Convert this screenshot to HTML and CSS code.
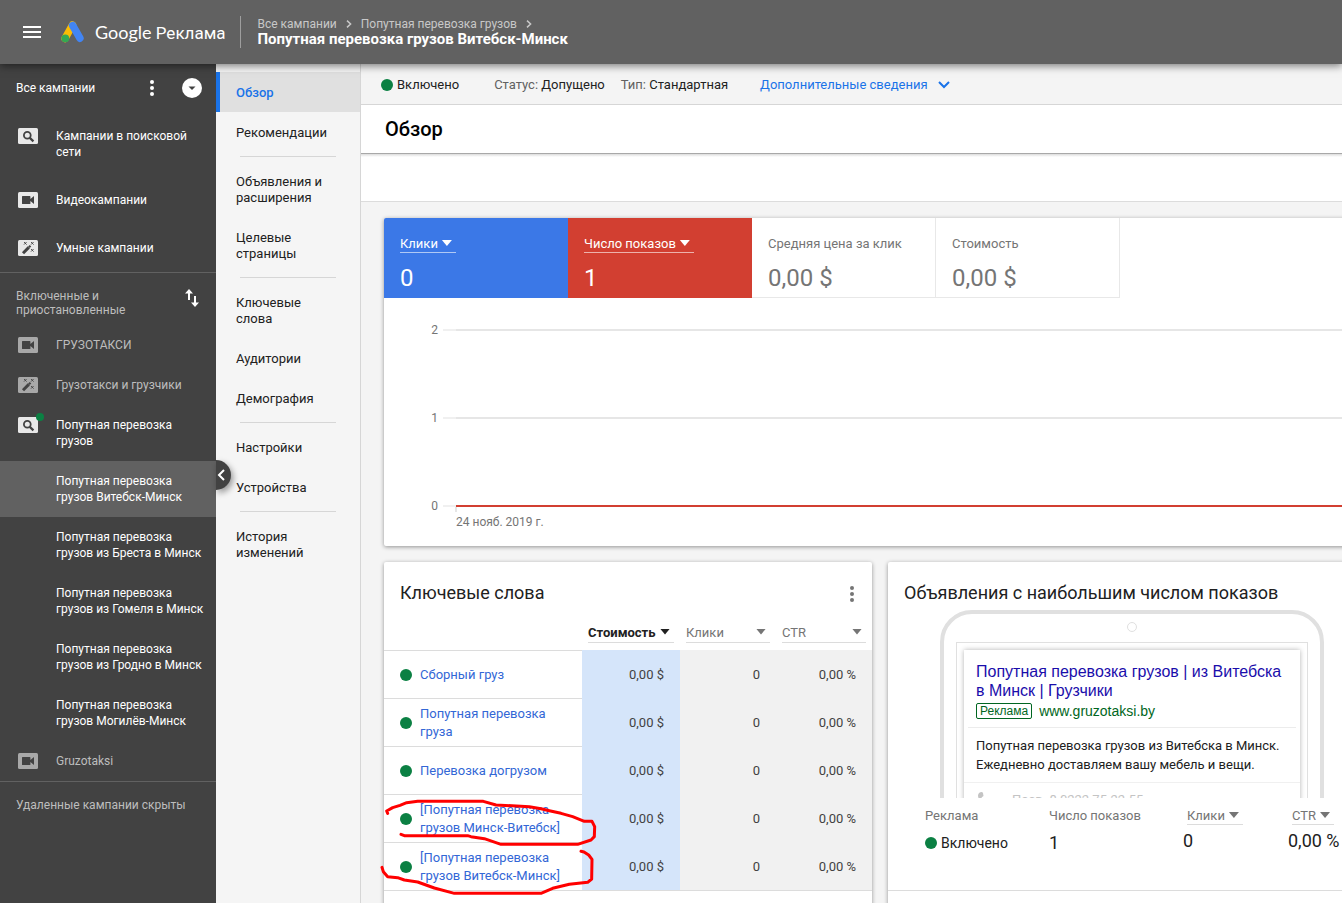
FILE: index.html
```html
<!DOCTYPE html>
<html lang="ru">
<head>
<meta charset="utf-8">
<title>Google Реклама</title>
<link rel="stylesheet" href="styles.css">
</head>
<body>
<svg class="defs" aria-hidden="true">
  <symbol id="i-search" viewBox="0 0 20 16"><rect width="20" height="16" rx="1.5" fill="currentColor"/><circle cx="9.3" cy="7.2" r="3.4" fill="none" stroke="#424242" stroke-width="1.800"/><path d="M11.600 9.600l3.800 3.800" stroke="#424242" stroke-width="2.200"/></symbol>
  <symbol id="i-video" viewBox="0 0 20 16"><rect width="20" height="16" rx="1.5" fill="currentColor"/><path d="M4 4.600q0-.6.6-.6h7.200q.6 0 .6.600v2.400L16 4v8l-3.600-3v2.400q0 .6-.6.6H4.600q-.6 0-.6-.6z" fill="#424242"/></symbol>
  <symbol id="i-wand" viewBox="0 0 20 16"><rect width="20" height="16" rx="1.5" fill="currentColor"/><path d="M5 13.200l5.800-5.800" stroke="#424242" stroke-width="3"/><path d="M10.900 7.300l1.600-1.600" stroke="#424242" stroke-width="2.200"/><path d="M6 2l2.600 2.600M8.600 2L6 4.600M13 2l2.600 2.600M15.600 2L13 4.600M13 9l2.600 2.600M15.600 9L13 11.600" stroke="#424242" stroke-width=".9"/></symbol>
  <symbol id="i-chevron" viewBox="0 0 6 8"><path d="M1 .6L4.600 4 1 7.400" fill="none" stroke="currentColor" stroke-width="1.500"/></symbol>
  <symbol id="i-more" viewBox="0 0 4 16"><circle cx="2" cy="2" r="2" fill="currentColor"/><circle cx="2" cy="8" r="2" fill="currentColor"/><circle cx="2" cy="14" r="2" fill="currentColor"/></symbol>
</svg>

<header class="topbar">
  <button class="plain" aria-label="Меню"><svg width="18" height="12" viewBox="0 0 18 12"><path d="M0 1h18M0 6h18M0 11h18" stroke="#fff" stroke-width="2"/></svg></button>
  <a class="brand" href="#">
    <svg width="24" height="22" viewBox="0 0 24 22"><path d="M11.500 4L4 17.500" stroke="#fbbc04" stroke-width="7.500" stroke-linecap="round"/><path d="M11.600 4.400L18.900 17.200" stroke="#4285f4" stroke-width="7.500" stroke-linecap="round"/><circle cx="4.300" cy="17.300" r="3.900" fill="#34a853"/></svg>
    <span class="brand-text"><span class="brand-name">Google</span> Реклама</span>
  </a>
  <div class="crumbs">
    <nav class="crumb-path"><a href="#">Все кампании</a><svg width="6" height="8"><use href="#i-chevron"/></svg><a href="#">Попутная перевозка грузов</a><svg width="6" height="8"><use href="#i-chevron"/></svg></nav>
    <div class="crumb-current">Попутная перевозка грузов Витебск-Минск</div>
  </div>
</header>

<div class="layout">
  <aside class="sidebar">
    <div class="side-head"><span>Все кампании</span>
      <button class="plain more" aria-label="Ещё"><svg width="4" height="16"><use href="#i-more"/></svg></button>
      <button class="plain" aria-label="Свернуть"><svg width="20" height="20" viewBox="0 0 20 20"><circle cx="10" cy="10" r="10" fill="#fff"/><path d="M6.500 8.500h7L10 12z" fill="#424242"/></svg></button>
    </div>
    <div class="group types">
      <a class="camp" href="#"><svg width="20" height="16"><use href="#i-search"/></svg><span>Кампании в поисковой сети</span></a>
      <a class="camp" href="#"><svg width="20" height="16"><use href="#i-video"/></svg><span>Видеокампании</span></a>
      <a class="camp" href="#"><svg width="20" height="16"><use href="#i-wand"/></svg><span>Умные кампании</span></a>
    </div>
    <div class="side-sort"><span>Включенные и приостановленные</span>
      <button class="plain" aria-label="Сортировка"><svg width="14" height="18" viewBox="0 0 14 18"><path d="M4 2v9M10 7v9" stroke="#fff" stroke-width="2"/><path d="M0 4.500L4 0l4 4.500zM6 13.500l4 4.500 4-4.500z" fill="#fff"/></svg></button>
    </div>
    <div class="group">
      <a class="camp paused" href="#"><svg width="20" height="16"><use href="#i-video"/></svg><span>ГРУЗОТАКСИ</span></a>
      <a class="camp paused" href="#"><svg width="20" height="16"><use href="#i-wand"/></svg><span>Грузотакси и грузчики</span></a>
      <a class="camp live" href="#"><svg width="20" height="16"><use href="#i-search"/></svg><span>Попутная перевозка грузов</span></a>
      <a class="camp child selected" href="#"><span>Попутная перевозка<br>грузов Витебск-Минск</span></a>
      <a class="camp child" href="#"><span>Попутная перевозка<br>грузов из Бреста в Минск</span></a>
      <a class="camp child" href="#"><span>Попутная перевозка<br>грузов из Гомеля в Минск</span></a>
      <a class="camp child" href="#"><span>Попутная перевозка<br>грузов из Гродно в Минск</span></a>
      <a class="camp child" href="#"><span>Попутная перевозка<br>грузов Могилёв-Минск</span></a>
      <a class="camp paused" href="#"><svg width="20" height="16"><use href="#i-video"/></svg><span>Gruzotaksi</span></a>
    </div>
    <div class="side-foot">Удаленные кампании скрыты</div>
  </aside>

  <nav class="pages">
    <a class="active" href="#">Обзор</a>
    <a href="#">Рекомендации</a>
    <hr>
    <a href="#">Объявления и расширения</a>
    <a href="#">Целевые<br>страницы</a>
    <hr>
    <a href="#">Ключевые<br>слова</a>
    <a href="#">Аудитории</a>
    <a href="#">Демография</a>
    <hr>
    <a href="#">Настройки</a>
    <a href="#">Устройства</a>
    <hr>
    <a href="#">История<br>изменений</a>
    <button class="collapse" aria-label="Свернуть панель"><svg width="9" height="12" viewBox="0 0 9 12"><path d="M8 1L3 6l5 5" fill="none" stroke="#fff" stroke-width="2"/></svg></button>
  </nav>

  <main class="main">
    <div class="status">
      <span class="state"><i class="dot"></i>Включено</span>
      <span class="pair"><span class="muted">Статус:</span> Допущено</span>
      <span class="pair"><span class="muted">Тип:</span> Стандартная</span>
      <button class="details">Дополнительные сведения<svg width="12" height="8" viewBox="0 0 12 8"><path d="M1 1l5 5 5-5" fill="none" stroke="#1a73e8" stroke-width="2"/></svg></button>
    </div>
    <div class="title-bar"><h1>Обзор</h1></div>
    <div class="filter-bar"></div>

    <div class="cards">
      <section class="card chart-card">
        <div class="metrics">
          <div class="metric blue"><button class="pick">Клики<i class="caret"></i></button><div class="big">0</div></div>
          <div class="metric red"><button class="pick">Число показов<i class="caret"></i></button><div class="big">1</div></div>
          <div class="metric"><div class="name">Средняя цена за клик</div><div class="big">0,00 $</div></div>
          <div class="metric"><div class="name">Стоимость</div><div class="big">0,00 $</div></div>
        </div>
        <div class="chart">
          <div class="tick"><span>2</span><i class="stub"></i><i class="rule"></i></div>
          <div class="tick"><span>1</span><i class="stub"></i><i class="rule"></i></div>
          <div class="tick"><span>0</span><i class="stub"></i><i class="rule series"></i></div>
        </div>
        <div class="date">24 нояб. 2019 г.</div>
      </section>

      <section class="card keywords">
        <div class="card-head"><h2>Ключевые слова</h2><button class="plain" aria-label="Ещё"><svg width="4" height="16"><use href="#i-more"/></svg></button></div>
        <table>
          <colgroup><col class="c-word"><col class="c-cost"><col class="c-num"><col class="c-num"></colgroup>
          <thead><tr><td></td><th><button class="sort on">Стоимость<i class="caret"></i></button></th><th><button class="sort">Клики<i class="caret"></i></button></th><th><button class="sort">CTR<i class="caret"></i></button></th></tr></thead>
          <tbody>
            <tr><td><div class="word"><i class="dot"></i><a href="#">Сборный груз</a></div></td><td>0,00 $</td><td>0</td><td>0,00 %</td></tr>
            <tr><td><div class="word"><i class="dot"></i><a href="#">Попутная перевозка<br>груза</a></div></td><td>0,00 $</td><td>0</td><td>0,00 %</td></tr>
            <tr><td><div class="word"><i class="dot"></i><a href="#">Перевозка догрузом</a></div></td><td>0,00 $</td><td>0</td><td>0,00 %</td></tr>
            <tr><td><div class="word"><i class="dot"></i><a href="#">[Попутная перевозка<br>грузов Минск-Витебск]</a></div></td><td>0,00 $</td><td>0</td><td>0,00 %</td></tr>
            <tr><td><div class="word"><i class="dot"></i><a href="#">[Попутная перевозка<br>грузов Витебск-Минск]</a></div></td><td>0,00 $</td><td>0</td><td>0,00 %</td></tr>
          </tbody>
        </table>
        <svg class="marker" viewBox="0 0 900 519" aria-hidden="true"><g fill="none" stroke="#f00" stroke-width="9" stroke-linecap="round" stroke-linejoin="round"><path d="M35 250L32 243 50 233 72 226 92 218 125 214H322L360 225 460 230 495 236 520 242 555 250 590 260 625 274H648L656 290 655 320 645 330 605 343H375L325 326 285 320 275 317H85L75 313"/><path d="M18 412L22 425 35 440 65 443 85 450 125 456 175 474 235 490H495L530 475 580 463 635 457 647 447 648 388 638 375 624 366 615 364"/></g></svg>
      </section>

      <section class="card ads">
        <div class="card-head"><h2>Объявления с наибольшим числом показов</h2></div>
        <div class="preview">
          <div class="phone">
            <i class="camera"></i>
            <div class="screen"><div class="ad">
              <div class="ad-top"><a class="ad-title" href="#">Попутная перевозка грузов | из Витебска<br>в Минск | Грузчики</a><div class="ad-url"><span class="tag">Реклама</span>www.gruzotaksi.by</div></div>
              <p class="ad-text">Попутная перевозка грузов из Витебска в Минск.<br>Ежедневно доставляем вашу мебель и вещи.</p>
              <div class="ad-call"><svg width="14" height="14" viewBox="0 0 14 14"><path d="M1 1q3-2 4 0l.500 3-2 1.500q1 2 3 3L8 6.500l3.500 1v4q-1 2.500-5 1Q0 9 0 3z" fill="#c4c4c4"/></svg><span>Позв. 8 0222 75-22-55</span></div>
            </div></div>
          </div>
        </div>
        <div class="ad-stats">
          <div><span class="label">Реклама</span><span class="state on"><i class="dot"></i>Включено</span></div>
          <div><span class="label">Число показов</span><span class="value">1</span></div>
          <div><button class="sort">Клики<i class="caret"></i></button><span class="value">0</span></div>
          <div><button class="sort">CTR<i class="caret"></i></button><span class="value">0,00 %</span></div>
        </div>
      </section>
    </div>
  </main>
</div>
</body>
</html>
```
FILE: styles.css
```css
* { box-sizing: border-box; }
body { margin: 0; height: 100vh; display: flex; flex-direction: column; overflow: hidden; font: 13px/16px Roboto, "Liberation Sans", sans-serif; color: #212121; background: #f4f4f4; }
a { color: inherit; text-decoration: none; }
svg { display: block; flex: none; }
h1, h2, p { margin: 0; font-weight: 400; }
i { display: block; flex: none; font-style: normal; }
button { padding: 0; border: 0; background: none; font: inherit; color: inherit; cursor: pointer; }
.defs { position: absolute; width: 0; height: 0; }
.plain { flex: none; }
.dot { width: 12px; height: 12px; border-radius: 50%; background: #0b8043; }
.caret { width: 10px; height: 6px; background: currentColor; clip-path: polygon(0 0, 100% 0, 50% 100%); }

.topbar { position: relative; z-index: 3; flex: none; height: 64px; display: flex; align-items: center; padding-left: 23px; background: #616161; color: #fff; box-shadow: 0 2px 8px rgba(0, 0, 0, .5); }
.brand { display: flex; align-items: center; gap: 10px; margin-left: 20px; }
.brand-text { font-size: 17px; line-height: 24px; }
.brand-name { font-family: Lato, Roboto, sans-serif; font-size: 18px; }
.crumbs { margin-left: 14px; padding-left: 17px; border-left: 1px solid #9e9e9e; height: 32px; display: flex; flex-direction: column; justify-content: center; }
.crumb-path { display: flex; align-items: center; gap: 9px; font-size: 12px; line-height: 14px; color: #c8c8c8; }
.crumb-current { font-size: 15px; line-height: 16px; font-weight: 700; }

.layout { flex: 1; min-height: 0; display: flex; }
.sidebar { flex: none; width: 216px; background: #424242; color: #fff; font-size: 12px; overflow: hidden; }
.side-head { display: flex; align-items: center; height: 48px; padding: 0 14px 0 16px; }
.more { margin: 0 28px 0 auto; }
.camp { position: relative; display: flex; align-items: flex-start; gap: 18px; padding: 12px 10px 12px 18px; }
.types { border-bottom: 1px solid #616161; }
.types .camp { padding: 16px 24px 16px 18px; }
.camp svg { color: #e8e8e8; }
.paused { color: #bdbdbd; }
.paused svg { color: #a8a8a8; }
.child { padding-left: 56px; padding-right: 0; }
.selected { background: #616161; }
.live::after { content: ""; position: absolute; left: 36px; top: 8px; width: 8px; height: 8px; border-radius: 50%; background: #0b8043; }
.side-sort { display: flex; align-items: flex-start; justify-content: space-between; padding: 16px 17px 8px 16px; line-height: 14px; color: #bdbdbd; }
.side-sort span { width: 120px; }
.side-foot { padding: 15px 16px; border-top: 1px solid #616161; color: #bdbdbd; }

.pages { position: relative; flex: none; width: 145px; padding-top: 8px; border-right: 1px solid #d6d6d6; background: #f5f5f5; }
.pages a { display: block; padding: 13px 16px 11px 20px; }
.pages .active { padding-left: 16px; border-left: 4px solid #1a73e8; background: #e0e0e0; color: #1a73e8; font-weight: 500; }
.pages hr { height: 1px; margin: 4px 24px; border: 0; background: #d6d6d6; }
.collapse { position: absolute; left: 0; top: 396px; width: 15px; height: 30px; border-radius: 0 15px 15px 0; background: #424242; box-shadow: 2px 3px 6px rgba(0, 0, 0, .4); }

.main { flex: 1; min-width: 0; overflow: hidden; }
.status { display: flex; align-items: center; height: 41px; padding: 2px 0 0 20px; border-bottom: 1px solid #d6d6d6; }
.state { display: flex; align-items: center; gap: 4px; margin-right: 35px; }
.pair { margin-right: 16px; }
.muted { color: #616161; }
.details { display: flex; align-items: center; gap: 10px; margin-left: 16px; color: #1a73e8; }
.title-bar { height: 48px; padding: 12px 24px; background: #fff; }
.title-bar h1 { font-size: 20px; line-height: 24px; font-weight: 500; color: #000; }
.filter-bar { height: 49px; border-bottom: 1px solid #dcdcdc; background: linear-gradient(#a8a8a8 1px, #dcdcdc 1px, #fff 4px); }

.cards { display: grid; grid-template-columns: repeat(2, minmax(488px, 1fr)); gap: 16px; padding: 16px 23px; }
.card { position: relative; border-radius: 2px; background: #fff; box-shadow: 0 1px 4px rgba(0, 0, 0, .4); }
.chart-card { grid-column: 1 / -1; padding-bottom: 16px; }
.keywords { padding-bottom: 48px; }
.metrics { display: flex; }
.metric { width: 184px; height: 80px; padding: 17px 16px 0; border-right: 1px solid #e8e8e8; border-bottom: 1px solid #e8e8e8; color: #757575; }
.metric.blue, .metric.red { border: 0; color: #fff; }
.blue { background: #3b78e7; border-radius: 2px 0 0; }
.metric.red { background: #d23f31; }
.pick { display: flex; gap: 4px; height: 18px; border-bottom: 1px solid rgba(255, 255, 255, .6); padding-right: 4px; line-height: 18px; }
.pick .caret { margin-top: 5px; }
.name { height: 18px; line-height: 18px; }
.big { margin-top: 10px; font-size: 24px; line-height: 30px; }
.chart { display: flex; flex-direction: column; gap: 72px; padding-top: 24px; color: #757575; font-size: 12px; }
.tick { display: flex; align-items: center; height: 16px; }
.tick span { width: 54px; margin-right: 5px; text-align: right; }
.stub { width: 13px; height: 2px; background: #f0f0f0; }
.rule { flex: 1; height: 2px; background: #e6e6e6; }
.series { position: relative; background: #d23f31; }
.series::after { content: ""; position: absolute; left: -1px; top: 2px; width: 2px; height: 5px; background: #e6e6e6; }
.date { margin-left: 72px; font-size: 12px; color: #757575; }

.card-head { display: flex; justify-content: space-between; height: 48px; padding: 20px 18px 0 16px; }
.card-head h2 { font-size: 18px; line-height: 22px; white-space: nowrap; }
.card-head button { height: 24px; color: #757575; }
table { width: 100%; border-collapse: collapse; table-layout: fixed; }
.c-cost { width: 98px; }
.c-num { width: 96px; }
thead td, thead th { height: 40px; padding: 5px 6px 0; vertical-align: middle; font-weight: 400; }
thead td { padding: 0; }
.sort { display: flex; justify-content: space-between; gap: 4px; width: 100%; height: 20px; padding: 0 4px 0 0; line-height: 20px; border-bottom: 1px solid #dcdcdc; color: #757575; }
.sort .caret { margin-top: 6px; }
.on { color: #212121; font-weight: 700; }
tbody td { height: 48px; padding: 2px 16px 0; text-align: right; color: #424242; background: #f1f1f1; }
tbody td:nth-child(2) { background: #d5e5fa; }
tbody td:first-child { background: #fff; border-top: 1px solid #dcdcdc; text-align: left; padding-right: 0; }
tbody { border-bottom: 1px solid #dcdcdc; }
.word { display: flex; align-items: center; gap: 8px; line-height: 18px; color: #3367d6; }
.marker { position: absolute; left: -8px; top: 168px; width: 300px; height: 173px; pointer-events: none; }

.preview { height: 188px; overflow: hidden; }
.phone { width: 384px; height: 300px; margin: 0 auto; padding: 8px 12px; border: 4px solid #e0e0e0; border-radius: 32px; }
.camera { width: 10px; height: 10px; margin: 0 auto 10px; border: 1px solid #e0e0e0; border-radius: 50%; }
.screen { height: 260px; padding: 7px; border: 1px solid #e0e0e0; }
.ad { height: 252px; box-shadow: 0 0 5px rgba(0, 0, 0, .3); }
.ad-top { margin: 0 4px; padding: 12px 8px 8px; border-bottom: 1px solid #ececec; font-family: "Liberation Sans", sans-serif; }
.ad-title { display: block; font-size: 16px; line-height: 19px; color: #1a0dab; white-space: nowrap; }
.ad-url { display: flex; align-items: center; gap: 7px; margin-top: 3px; font-size: 14px; color: #006621; }
.tag { padding: 0 3px; border: 1px solid #006621; border-radius: 2px; font-size: 12px; line-height: 14px; }
.ad-text { padding: 8px 12px; line-height: 19px; white-space: nowrap; }
.ad-call { display: flex; gap: 20px; padding: 9px 14px; border-top: 1px solid #f0f0f0; color: #c4c4c4; }
.ad-stats { display: grid; grid-template-columns: 124px 134px 105px 1fr; height: 93px; padding: 9px 40px 0 37px; border-bottom: 1px solid #dcdcdc; color: #757575; }
.ad-stats > div { display: flex; flex-direction: column; align-items: flex-start; gap: 9px; }
.ad-stats > div:nth-child(n + 3) { gap: 7px; }
.ad-stats .sort { width: auto; height: 18px; line-height: 18px; margin-left: 4px; }
.ad-stats .caret { margin-top: 5px; }
.ad-stats .label { line-height: 18px; }
.value { font-size: 18px; line-height: 18px; color: #212121; white-space: nowrap; }
.state.on { margin: 0; font-size: 14px; line-height: 18px; font-weight: 400; }
```
